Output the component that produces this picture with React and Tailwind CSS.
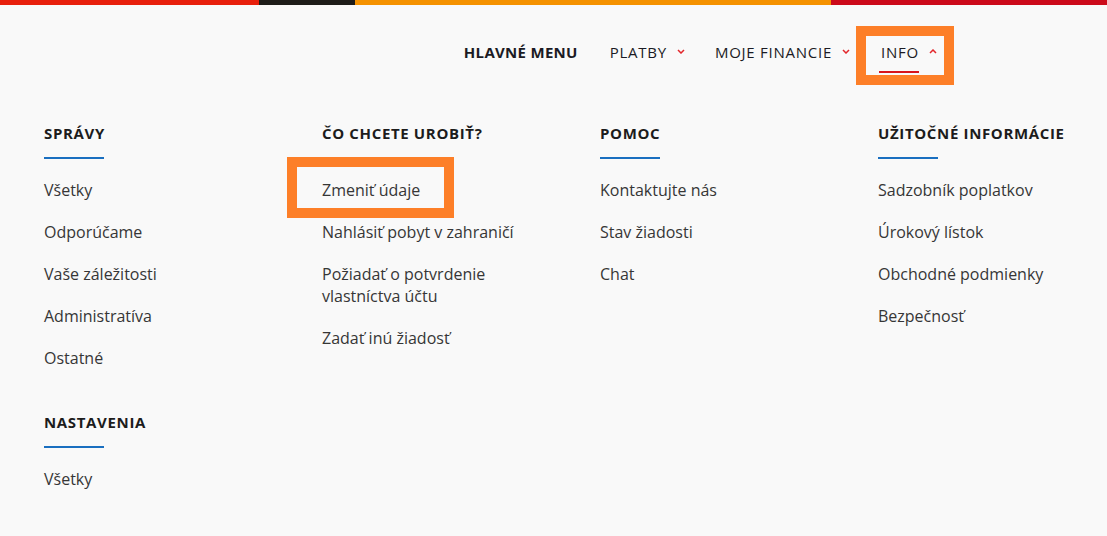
import { ChevronDown, ChevronUp } from 'lucide-react';

const columns = [
  {
    title: 'Správy',
    items: ['Všetky', 'Odporúčame', 'Vaše záležitosti', 'Administratíva', 'Ostatné'],
    extra: { title: 'Nastavenia', items: ['Všetky'] },
  },
  {
    title: 'Čo chcete urobiť?',
    items: ['Zmeniť údaje', 'Nahlásiť pobyt v zahraničí', 'Požiadať o potvrdenie vlastníctva účtu', 'Zadať inú žiadosť'],
  },
  { title: 'Pomoc', items: ['Kontaktujte nás', 'Stav žiadosti', 'Chat'] },
  { title: 'Užitočné informácie', items: ['Sadzobník poplatkov', 'Úrokový lístok', 'Obchodné podmienky', 'Bezpečnosť'] },
];

function Chevron({ up }) {
  return (
    <svg width="8" height="5" viewBox="0 0 8 5" className="ml-[10px] mt-[-2px]">
      <path
        d={up ? 'M1 4l3-3 3 3' : 'M1 1l3 3 3-3'}
        fill="none"
        stroke="#e3262b"
        strokeWidth="1.5"
      />
    </svg>
  );
}

function Section({ title, items }) {
  return (
    <div>
      <h3 className="text-[15px] leading-5 font-bold uppercase tracking-[0.65px] text-[#1c1c1c]">{title}</h3>
      <div className="mt-[14px] h-[2px] w-[60px] bg-[#1a6fc0]" />
      <ul className="mt-5 flex flex-col gap-5">
        {items.map((item) => (
          <li key={item} className="relative max-w-[230px] text-[16px] leading-[22px] text-[#363636]">
            {item === 'Zmeniť údaje' && (
              <span className="absolute -left-[35px] -top-[22px] h-[61px] w-[167px] border-[10px] border-[#fd7f28]" />
            )}
            {item}
          </li>
        ))}
      </ul>
    </div>
  );
}

export default function App() {
  return (
    <div className="min-h-[536px] w-full bg-[#f9f9f9] font-['Open_Sans',sans-serif]">
      <div className="flex h-[5px]">
        <div className="w-[259px] bg-[#e8200c]" />
        <div className="w-[96px] bg-[#1e1c19]" />
        <div className="w-[476px] bg-[#f59200]" />
        <div className="flex-1 bg-[#cc0a1a]" />
      </div>

      <nav className="flex items-center justify-end pt-[37px] pr-[170px] text-[15px] leading-5 text-[#1b1b24] uppercase tracking-[0.75px]">
        <span className="font-bold tracking-[0.3px]">Hlavné menu</span>
        <span className="ml-[32px] flex items-center">Platby<Chevron /></span>
        <span className="ml-[30px] flex items-center">Moje financie<Chevron /></span>
        <span className="relative ml-[31px] flex items-center">
          <span className="absolute -left-[25px] -top-[16px] h-[59px] w-[98px] border-[10px] border-[#fd7f28]" />
          Info<Chevron up />
          <span className="absolute -left-[2px] top-[29px] h-[2px] w-[40px] bg-[#d8141c]" />
        </span>
      </nav>

      <div className="mt-[61px] grid grid-cols-[278px_278px_278px_1fr] pl-[44px] pb-10">
        {columns.map((col) => (
          <div key={col.title}>
            <Section title={col.title} items={col.items} />
            {col.extra && (
              <div className="mt-[43px]">
                <Section title={col.extra.title} items={col.extra.items} />
              </div>
            )}
          </div>
        ))}
      </div>
    </div>
  );
}
